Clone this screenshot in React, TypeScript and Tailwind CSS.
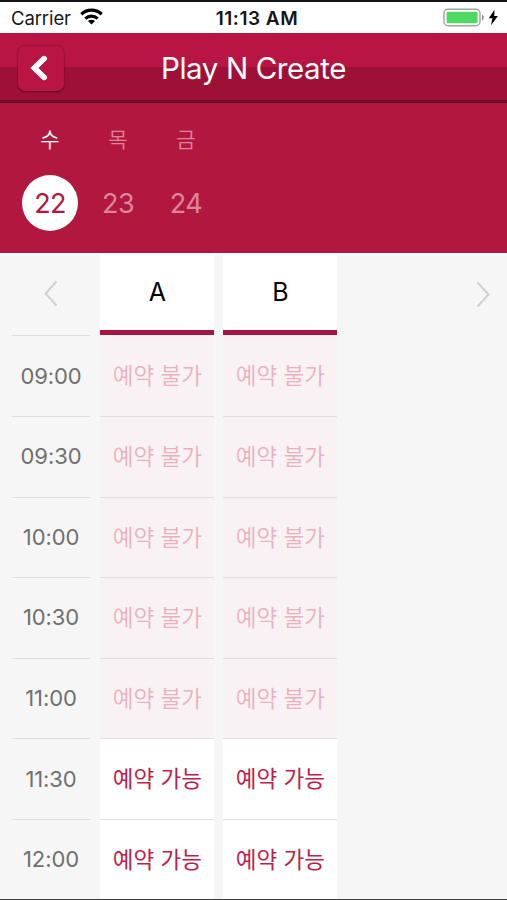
import clsx from "clsx";

interface Day {
  label: string;
  date: number;
}

const DAYS: Day[] = [
  { label: "수", date: 22 },
  { label: "목", date: 23 },
  { label: "금", date: 24 },
];

const TIMES = ["09:00", "09:30", "10:00", "10:30", "11:00", "11:30", "12:00"];

const ROOMS = ["A", "B"];

const FIRST_OPEN = "11:30";

function StatusBar() {
  return (
    <div className="h-[33px] shrink-0 border-t-2 border-[#151515] bg-white grid grid-cols-[1fr_auto_1fr] items-center text-[18.5px] leading-none text-[#151515]">
      <div className="flex items-center gap-[9px] pl-[11px] pt-0.5">
        <span className="tracking-[-0.1px]">Carrier</span>
        <svg width="23" height="17" viewBox="0 0 23 17" className="-mt-1" fill="none" stroke="#000" strokeWidth="3.2">
          <path d="M1.3 6.2C7.2.8 15.8.8 21.7 6.2" />
          <path d="M5.3 10.6c3.6-3.2 8.8-3.2 12.4 0" />
          <path d="M11.5 16.5 8 13c2-1.8 5-1.8 7 0z" fill="#000" stroke="none" />
        </svg>
      </div>
      <span className="pt-0.5 pl-[7px] font-semibold text-[19px] tracking-[0.5px]">11:13 AM</span>
      <div className="flex items-center justify-end pr-[8px]">
        <svg width="42" height="19" viewBox="0 0 42 19">
          <rect x="1" y="1.3" width="36" height="16.4" rx="4" fill="#fff" stroke="#a3a3a3" strokeWidth="1.4" />
          <rect x="3.6" y="3.8" width="31" height="11.4" rx="1.5" fill="#4cd964" />
          <path d="M39 6.5c2.4 1 2.4 5 0 6z" fill="#8e8e8e" />
        </svg>
        <svg width="11" height="17" viewBox="0 0 11 17" className="ml-[3px]">
          <path d="M6.5.8.7 9.2h3.7L3 16.2l6.9-9.3H6.2z" fill="#000" />
        </svg>
      </div>
    </div>
  );
}

function NavBar() {
  return (
    <header className="h-[70px] shrink-0 border-b-3 border-[#700c26] bg-[linear-gradient(#b81543_0,#b81543_34px,#9e1136_34px)] grid grid-cols-[1fr_auto_1fr] items-center text-white">
      <button
        type="button"
        className="ml-[18px] mt-0.5 size-[46px] rounded-[7px] bg-[#b81543] shadow-[0_1px_2px_rgba(70,0,20,0.75),inset_0_1px_1px_rgba(90,0,25,0.25)] flex items-center justify-center"
      >
        <svg width="20" height="26" viewBox="0 0 20 26" className="-ml-1" fill="none" stroke="#fff" strokeWidth="5.6" strokeLinecap="round" strokeLinejoin="miter">
          <path d="M15.2 3.6 5.4 13l9.8 9.4" />
        </svg>
      </button>
      <h1 className="pt-1 text-[29.5px] leading-none tracking-[-0.4px]">Play N Create</h1>
    </header>
  );
}

function DayPicker() {
  return (
    <div className="h-[150px] shrink-0 bg-[#b2173f] flex gap-[12px] pl-[22px] pt-[24px]">
      {DAYS.map((d, i) => (
        <div key={d.date} className={clsx("w-14 flex flex-col items-center", i === 0 ? "text-white" : "text-[#dc859b]")}>
          <span className="text-[21px] leading-[26px] font-[350]">{d.label}</span>
          <span
            className={clsx(
              "mt-[22px] size-14 rounded-full flex items-center justify-center pt-px text-[27px] leading-none tracking-[-0.6px]",
              i === 0 && "bg-white text-[#b2173f]",
            )}
          >
            {d.date}
          </span>
        </div>
      ))}
    </div>
  );
}

function Arrow({ right = false }: { right?: boolean }) {
  return (
    <svg width="14" height="27" viewBox="0 0 14 27" className={clsx("-mt-1", right && "-scale-x-100")} fill="none" stroke="#d0d0d3" strokeWidth="1.9">
      <path d="M12.5 1.5 1.5 13.5l11 12" />
    </svg>
  );
}

function TimeColumn() {
  return (
    <div className="w-[78px] flex flex-col">
      <div className="h-[81.4px] border-b border-[#dedee0] flex items-center justify-center">
        <Arrow />
      </div>
      {TIMES.map((t) => (
        <div key={t} className="h-[80.6px] shrink-0 border-b border-[#dedee0] flex items-center justify-center text-[22px] text-[#707070] tracking-[-0.1px]">
          {t}
        </div>
      ))}
    </div>
  );
}

function RoomColumn({ name }: { name: string }) {
  return (
    <div className="w-[114px] flex flex-col">
      <div className="h-[80.4px] mb-px border-b-5 border-[#ad123f] bg-white flex items-center justify-center pt-px text-[25px] text-black">
        {name}
      </div>
      {TIMES.map((t) => {
        const open = t >= FIRST_OPEN;
        return (
          <div
            key={t}
            className={clsx(
              "h-[80.6px] shrink-0 border-b border-[#e2dde0] flex items-center justify-center text-[22.5px] whitespace-nowrap",
              open ? "bg-white text-[#bd1e4a]" : "bg-[#f9f2f4] font-[350] text-[#e9b0c0]",
            )}
          >
            {open ? "예약 가능" : "예약 불가"}
          </div>
        );
      })}
    </div>
  );
}

export default function App() {
  return (
    <div className="w-[507px] h-[900px] overflow-hidden flex flex-col bg-[#f6f6f6] font-[Inter,'Noto_Sans_CJK_KR',sans-serif] border-b border-[#3c3c3c]">
      <StatusBar />
      <NavBar />
      <DayPicker />
      <main className="flex-1 min-h-0 overflow-hidden border-t-2 border-white flex items-start pl-[12px]">
        <TimeColumn />
        <div className="ml-[10.4px] flex gap-[9px]">
          {ROOMS.map((r) => (
            <RoomColumn key={r} name={r} />
          ))}
        </div>
        <div className="ml-auto mr-[17px] h-[82px] flex items-center">
          <Arrow right />
        </div>
      </main>
    </div>
  );
}
